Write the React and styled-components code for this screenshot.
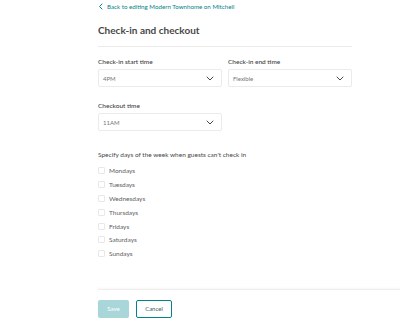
import styled, { createGlobalStyle } from "styled-components"

const days = ["Mondays", "Tuesdays", "Wednesdays", "Thursdays", "Fridays", "Saturdays", "Sundays"]

const GlobalStyle = createGlobalStyle`
    body {
        margin: 0;
        background: #fff;
        font-family: Lato, "Open Sans", sans-serif;
        color: #484848;
    }
`;

function Chevron() {
    return (
        <svg width="8" height="5" viewBox="0 0 8 5">
            <path d="M1 1 L4 4 L7 1" fill="none" stroke="#484848" strokeWidth="1" strokeLinecap="round" strokeLinejoin="round" />
        </svg>
    )
}

function Select({ value }) {
    return (
        <SelectBox>
            <span>{value}</span>
            <Chevron />
        </SelectBox>
    )
}

export default function App() {
    return (
        <>
            <GlobalStyle />
            <Page>
                <Main>
                    <BackLink>
                        <svg width="5" height="7" viewBox="0 0 5 7">
                            <path d="M4 1 L1.5 3.5 L4 6" fill="none" stroke="#008489" strokeWidth="1" strokeLinecap="round" strokeLinejoin="round" />
                        </svg>
                        Back to editing Modern Townhome on Mitchell
                    </BackLink>
                    <Title>Check-in and checkout</Title>
                    <Divider />
                    <Fields>
                        <Field>
                            <Label>Check-in start time</Label>
                            <Select value="4PM" />
                        </Field>
                        <Field>
                            <Label>Check-in end time</Label>
                            <Select value="Flexible" />
                        </Field>
                        <Field>
                            <Label>Checkout time</Label>
                            <Select value="11AM" />
                        </Field>
                    </Fields>
                    <Question>Specify days of the week when guests can't check in</Question>
                    <DayList>
                        {days.map(d => (
                            <Day key={d}>
                                <Box />
                                {d}
                            </Day>
                        ))}
                    </DayList>
                </Main>
                <Footer>
                    <SaveButton disabled>Save</SaveButton>
                    <CancelButton>Cancel</CancelButton>
                </Footer>
            </Page>
        </>
    )
}

const Page = styled.div`
    padding-left: 98px;
    height: 322px;
    overflow: hidden;
`;

const Main = styled.div`
    width: 254px;
`;

const BackLink = styled.div`
    display: flex;
    align-items: center;
    gap: 4px;
    height: 12px;
    font-size: 6.2px;
    color: #008489;
`;

const Title = styled.h1`
    margin: 12px 0 0;
    font-size: 10px;
    line-height: 12px;
    font-weight: 700;
    color: #484848;
`;

const Divider = styled.div`
    margin-top: 10px;
    height: 1px;
    background: #ebebeb;
`;

const Fields = styled.div`
    display: grid;
    grid-template-columns: 124px 124px;
    column-gap: 6px;
    row-gap: 14px;
    margin-top: 10px;
`;

const Field = styled.div`
    display: flex;
    flex-direction: column;
    gap: 2px;
`;

const Label = styled.div`
    font-size: 6.5px;
    line-height: 10px;
    font-weight: 500;
    color: #404040;
`;

const SelectBox = styled.div`
    box-sizing: border-box;
    height: 18px;
    border: 1px solid #ebebeb;
    border-radius: 2px;
    display: flex;
    align-items: center;
    justify-content: space-between;
    padding: 0 7px 0 4px;
    font-size: 6px;
    color: #767676;
`;

const Question = styled.div`
    margin-top: 19px;
    font-size: 6.5px;
    line-height: 10px;
    color: #484848;
`;

const DayList = styled.div`
    margin-top: 4px;
    display: flex;
    flex-direction: column;
`;

const Day = styled.label`
    display: flex;
    align-items: center;
    gap: 4px;
    height: 13.8px;
    font-size: 6.5px;
    font-weight: 400;
    color: #5e5e5e;
`;

const Box = styled.span`
    box-sizing: border-box;
    width: 7px;
    height: 7px;
    border: 1px solid #e8e8e8;
    border-radius: 1px;
`;

const Footer = styled.div`
    margin-top: 28px;
    border-top: 1px solid #eeeeee;
    box-shadow: 0 -1px 2px rgba(0, 0, 0, 0.04);
    padding-top: 10px;
    display: flex;
    gap: 7px;
`;

const BaseButton = styled.button`
    box-sizing: border-box;
    height: 18px;
    border-radius: 2px;
    font-family: inherit;
    font-size: 6px;
    font-weight: 400;
    padding: 0;
`;

const SaveButton = styled(BaseButton)`
    width: 31px;
    border: none;
    background: #a9d7d9;
    color: #ffffff;
`;

const CancelButton = styled(BaseButton)`
    width: 36px;
    border: 1.5px solid #008489;
    background: #fff;
    color: #3b5e60;
`;
